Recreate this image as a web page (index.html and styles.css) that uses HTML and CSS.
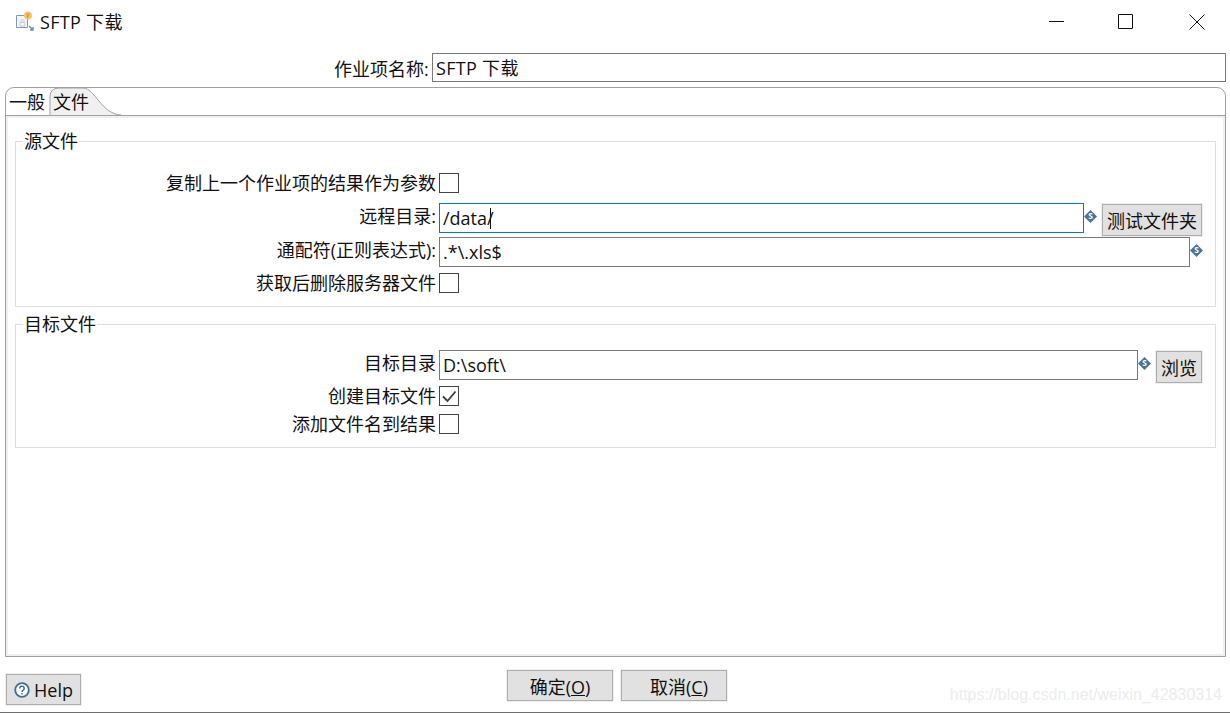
FILE: index.html
```html
<!DOCTYPE html>
<html lang="zh-CN">
<head>
  <meta charset="UTF-8" />
  <title>SFTP 下载</title>
  <link rel="stylesheet" href="styles.css">
</head>
<body>
  <div class="window">
    <div class="titlebar">
      <svg class="app-icon" width="20" height="22" viewBox="0 0 20 22">
        <path d="M1.5 4.5h11v12h-11z" fill="#f4f7fa" stroke="#7d9bb8"/>
        <path d="M5 11.5h5v3.5h-5z M6 11.5v-1.5a1.5 1.5 0 0 1 3 0v1.5" fill="none" stroke="#c3ccd4"/>
        <circle cx="13" cy="4.5" r="4" fill="#f8c36c"/>
        <path d="M11.5 3h3.5M11.5 5h3M12.5 3v4" stroke="#e8902a" fill="none"/>
        <path d="M14 15l4 4M18 16v3h-3" stroke="#6d8fae" stroke-width="1.4" fill="none"/>
      </svg>
      <span class="title">SFTP 下载</span>
      <div class="win-controls">
        <svg class="win-min" width="16" height="16" viewBox="0 0 16 16"><path d="M0 7.5h15" stroke="#111"/></svg>
        <svg width="16" height="16" viewBox="0 0 16 16"><path d="M.5.5h14v14H.5z" fill="none" stroke="#111"/></svg>
        <svg width="16" height="16" viewBox="0 0 16 16"><path d="M.5.5l15 15M15.5.5l-15 15" stroke="#111"/></svg>
      </div>
    </div>

    <div class="name-row">
      <label class="name-label">作业项名称:</label>
      <input class="field name-field" type="text" value="SFTP 下载" />
    </div>

    <div class="folder">
      <div class="tab-strip">
        <svg class="tab-shape" width="74" height="29" viewBox="0 0 74 29">
          <path d="M1 28V10Q1 1 10 1H34C46 1 52 27 72 28Z" fill="#f0f0f0"/>
          <path d="M1 28V10Q1 1 10 1H34C46 1 52 27 72 28" fill="none" stroke="#a0a0a0"/>
        </svg>
        <span class="tab">一般</span>
        <span class="tab tab-active">文件</span>
      </div>

      <div class="tab-body">
        <fieldset class="group group-source">
          <legend>源文件</legend>
          <div class="row row-first">
            <label class="row-label">复制上一个作业项的结果作为参数</label>
            <span class="check"></span>
          </div>
          <div class="row row-remote">
            <label class="row-label">远程目录:</label>
            <div class="field-wrap">
              <input class="field field-focus" type="text" value="/data/" />
              <span class="caret"></span>
            </div>
            <svg class="var-icon" width="13" height="13" viewBox="0 0 14 14"><path d="M7 0l7 7-7 7-7-7z" fill="#4a7396"/><text x="7" y="10" class="var-s">S</text></svg>
            <button class="btn btn-test" type="button">测试文件夹</button>
          </div>
          <div class="row row-mask">
            <label class="row-label">通配符(正则表达式):</label>
            <input class="field" type="text" value=".*\.xls$" />
            <svg class="var-icon" width="13" height="13" viewBox="0 0 14 14"><path d="M7 0l7 7-7 7-7-7z" fill="#4a7396"/><text x="7" y="10" class="var-s">S</text></svg>
          </div>
          <div class="row row-delete">
            <label class="row-label">获取后删除服务器文件</label>
            <span class="check"></span>
          </div>
        </fieldset>

        <fieldset class="group group-target">
          <legend>目标文件</legend>
          <div class="row row-dest">
            <label class="row-label">目标目录</label>
            <input class="field" type="text" value="D:\soft\" />
            <svg class="var-icon" width="13" height="13" viewBox="0 0 14 14"><path d="M7 0l7 7-7 7-7-7z" fill="#4a7396"/><text x="7" y="10" class="var-s">S</text></svg>
            <button class="btn btn-browse" type="button">浏览</button>
          </div>
          <div class="row row-create">
            <label class="row-label">创建目标文件</label>
            <span class="check">
              <svg width="18" height="18" viewBox="0 0 18 18"><path d="M3 9.5l4.5 4.5 8-9.5" fill="none" stroke="#3a3a3a" stroke-width="1.8"/></svg>
            </span>
          </div>
          <div class="row row-add">
            <label class="row-label">添加文件名到结果</label>
            <span class="check"></span>
          </div>
        </fieldset>
      </div>
    </div>

    <div class="footer">
      <button class="btn btn-help" type="button">
        <svg width="16" height="16" viewBox="0 0 16 16"><circle cx="8" cy="8" r="6.8" fill="#fff" stroke="#3f6d94" stroke-width="1.8"/><path d="M5.8 6.4a2.2 2.2 0 1 1 3.4 1.8c-.8.5-1.2.9-1.2 1.8" fill="none" stroke="#3f6d94" stroke-width="1.5"/><path d="M8 11v1.6" stroke="#3f6d94" stroke-width="1.5"/></svg>
        Help
      </button>
      <button class="btn btn-action btn-ok" type="button">确定(<u>O</u>)</button>
      <button class="btn btn-action btn-cancel" type="button">取消(<u>C</u>)</button>
      <span class="watermark">https://blog.csdn.net/weixin_42830314</span>
    </div>
  </div>
</body>
</html>
```

FILE: styles.css
```css
* {
  box-sizing: border-box;
  font-family: "Open Sans", "Noto Sans CJK SC", sans-serif;
}

body {
  margin: 0;
  background: #fff;
  color: #111;
  font-size: 18px;
}

.window {
  width: 1230px;
  height: 713px;
  border-bottom: 1px solid #6e6e6e;
  overflow: hidden;
  position: relative;
}

.titlebar {
  height: 53px;
  display: flex;
  align-items: flex-start;
  padding: 11px 0 0 15px;
}

.app-icon {
  flex: none;
}

.title {
  margin-left: 5px;
  line-height: 22px;
  letter-spacing: 0.3px;
}

.win-controls {
  margin-left: auto;
  display: flex;
  gap: 55px;
  padding: 3px 25px 0 0;
}

.win-min {
  margin-right: -2px;
}

.name-row {
  height: 29px;
  display: flex;
  align-items: center;
  padding: 0 4px 0 334px;
}

.name-label {
  width: 95px;
  white-space: nowrap;
}

.field {
  height: 30px;
  flex: 1;
  min-width: 0;
  border: 1px solid #7a7a7a;
  padding: 0 3px;
  font-size: 18px;
  color: #111;
  background: #fff;
  outline: none;
  border-radius: 0;
}

.name-field {
  height: 29px;
  margin-left: 3px;
  letter-spacing: 0.3px;
  padding-bottom: 2px;
}

.field-focus {
  width: 100%;
  height: 30px;
  border-color: #0078d7;
}

.field-wrap {
  flex: 1;
  position: relative;
  height: 30px;
}

.caret {
  position: absolute;
  left: 51px;
  top: 5px;
  height: 21px;
  border-left: 1px solid #111;
}

.folder {
  margin: 5px 4px 0 5px;
  height: 570px;
  border: 1px solid #a0a0a0;
  border-radius: 9px 9px 0 0;
}

.tab-strip {
  height: 28px;
  position: relative;
  display: flex;
  border-bottom: 1px solid #a0a0a0;
  padding-left: 3px;
  line-height: 29px;
}

.tab-shape {
  position: absolute;
  left: 43px;
  top: -1px;
}

.tab {
  position: relative;
  width: 44px;
}

.tab-active {
  width: 40px;
}

.tab-body {
  height: 540px;
  border: 2px solid #f0f0f0;
  padding: 11px 7px 0;
}

.group {
  margin: 0;
  padding: 0;
  border: 1px solid #dedede;
}

.group legend {
  margin-left: 7px;
  padding: 0 1px;
  line-height: 24px;
}

.group-source {
  padding: 20px 0 13px;
}

.group-target {
  margin-top: 5px;
  padding: 14px 0 13px;
}

.row {
  display: flex;
  align-items: flex-start;
  padding-right: 13px;
}

.row-label {
  flex: none;
  width: 420px;
  margin-right: 3px;
  text-align: right;
  line-height: 20px;
  white-space: nowrap;
}

.row-remote {
  margin-top: 10px;
  height: 33px;
}

.row-remote .row-label,
.row-mask .row-label,
.row-dest .row-label {
  line-height: 26px;
}

.row-mask {
  margin-top: 1px;
  height: 30px;
  padding-right: 12px;
}

.row-delete {
  margin-top: 6px;
}

.row-dest {
  height: 33px;
}

.row-create {
  margin-top: 3px;
}

.row-add {
  margin-top: 8px;
}

.check {
  width: 20px;
  height: 20px;
  border: 1px solid #444;
  background: #fff;
  display: block;
}

.check svg {
  display: block;
}

.var-icon {
  flex: none;
  margin-top: 7px;
}

.var-s {
  fill: #fff;
  font-size: 9px;
  font-weight: 700;
  text-anchor: middle;
}

.btn {
  height: 32px;
  border: 1px solid #adadad;
  outline: 1px solid #f0f0f0;
  background: #e1e1e1;
  color: #111;
  font-size: 18px;
  padding: 0;
  border-radius: 0;
}

.btn-test {
  width: 100px;
  margin-left: 5px;
  margin-top: 1px;
  flex: none;
}

.btn-browse {
  width: 46px;
  margin-left: 5px;
  margin-top: 1px;
  flex: none;
}

.footer {
  display: flex;
  align-items: flex-start;
  padding: 13px 0 0 6px;
}

.btn-help {
  width: 75px;
  height: 31px;
  margin-top: 4px;
  display: flex;
  align-items: center;
  justify-content: center;
  gap: 4px;
}

.btn-action {
  width: 106px;
  height: 31px;
  margin-left: 8px;
}

.btn-ok {
  margin-left: 426px;
}

.btn-cancel {
  padding-left: 10px;
}

.watermark {
  position: absolute;
  right: 8px;
  bottom: 8px;
  font-family: "Liberation Sans", sans-serif;
  font-size: 16px;
  color: #ececec;
}
```
